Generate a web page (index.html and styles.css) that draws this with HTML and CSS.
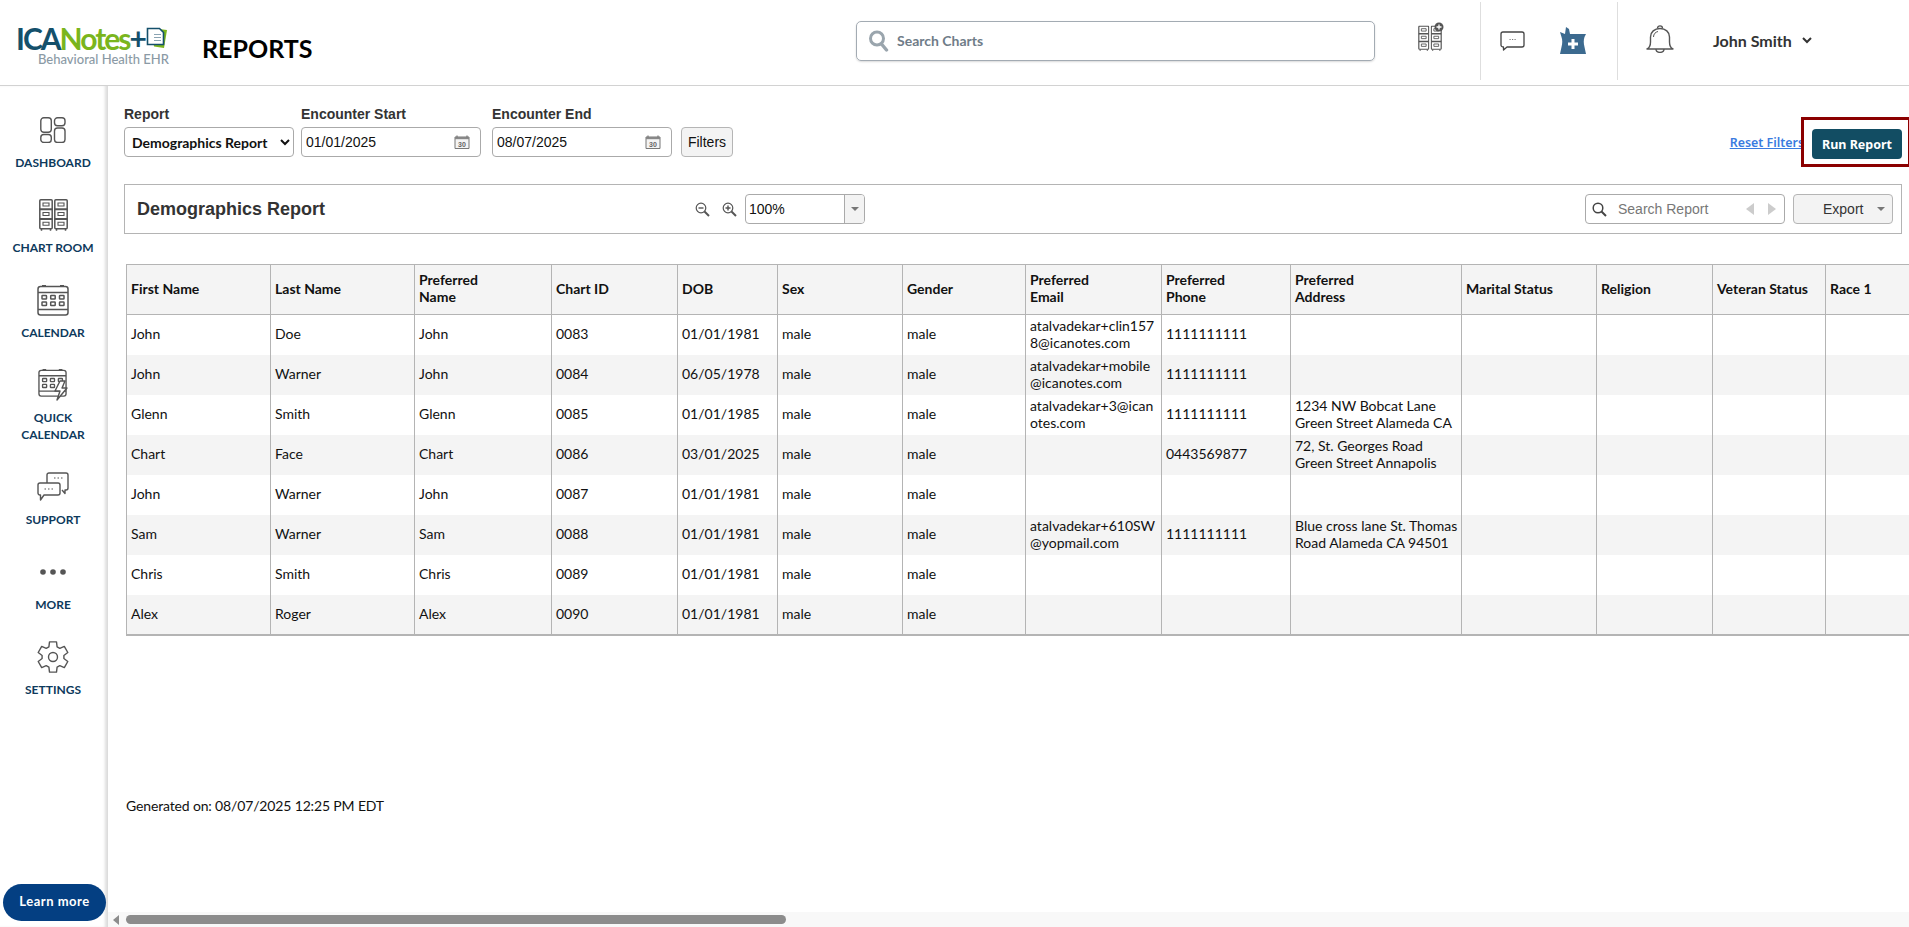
FILE: index.html
```html
<!DOCTYPE html>
<html lang="en">
<head>
<meta charset="utf-8">
<title>Reports</title>
<link rel="stylesheet" href="styles.css">
</head>
<body>
<svg class="defs" width="0" height="0" aria-hidden="true">
  <symbol id="cabinet" viewBox="0 0 14 32">
    <g fill="none" stroke="#555" stroke-width="1.500">
      <rect x=".8" y=".8" width="12.400" height="29" rx="1"/>
      <path d="M.8 10.300h12.400M.8 20h12.400" stroke-width="2"/>
      <path d="M4 4h6v3H4zM4 13.500h6v3H4zM4 23.200h6v3H4z" stroke-width="1.100"/>
      <path d="M2.500 30v1.700M11.500 30v1.700"/>
    </g>
  </symbol>
  <symbol id="calgrid" viewBox="0 0 32 31">
    <g fill="none" stroke="#555" stroke-width="1.500" stroke-linejoin="round">
      <rect x="1" y="1.500" width="30" height="28.500" rx="2.500"/>
      <path d="M1 7.500h30M1 24.500h30"/>
      <path d="M5 .8h4M23 .8h4" stroke-width="1.500"/>
      <rect x="5" y="10.500" width="4.500" height="3.500" rx=".6"/>
      <rect x="13.700" y="10.500" width="4.500" height="3.500" rx=".6"/>
      <rect x="22.500" y="10.500" width="4.500" height="3.500" rx=".6"/>
      <rect x="5" y="17" width="4.500" height="3.500" rx=".6"/>
      <rect x="13.700" y="17" width="4.500" height="3.500" rx=".6"/>
      <rect x="22.500" y="17" width="4.500" height="3.500" rx=".6"/>
    </g>
  </symbol>
</svg>

<header class="topbar">
  <div class="brand">
    <div class="brand-line">
      <span class="brand-ica">ICA</span><span class="brand-notes">Notes</span><span class="brand-ica">+</span>
      <svg class="brand-doc" width="21" height="25" viewBox="0 0 21 25">
        <path d="M5 3l16 2-3 18-10-1.500z" fill="#7ab51d"/>
        <path d="M1.500 3.500h12l4 4v12h-16z" fill="#fff" stroke="#14506b" stroke-width="1.600"/>
        <path d="M8 9.500h7M8 12.500h7M8 15.500h7" stroke="#8aa4b3" stroke-width="1"/>
      </svg>
    </div>
    <div class="brand-sub">Behavioral Health EHR</div>
  </div>
  <h1 class="page-title">REPORTS</h1>
  <label class="chart-search">
    <svg width="20" height="22" viewBox="0 0 20 22"><circle cx="8" cy="8.500" r="6.500" fill="none" stroke="#9aa5ad" stroke-width="3"/><path d="M12.500 14l5 6" stroke="#9aa5ad" stroke-width="3.400" stroke-linecap="round"/></svg>
    <input class="chart-search-input" type="text" placeholder="Search Charts">
  </label>
  <svg class="tool-cabinet" width="26" height="29" viewBox="0 0 26 29">
    <use href="#cabinet" x="0" y="3.500" width="11.500" height="25.500"/>
    <use href="#cabinet" x="12.500" y="3.500" width="11.500" height="25.500"/>
    <circle cx="21" cy="5" r="4.500" fill="#555"/>
    <path d="M18.500 5h5M21 2.500v5" stroke="#fff" stroke-width="1.300"/>
  </svg>
  <div class="tool-sep tool-sep-a"></div>
  <svg class="tool-msg" width="25" height="20" viewBox="0 0 25 20">
    <path d="M3 1h19a2 2 0 0 1 2 2v11a2 2 0 0 1-2 2H7l-3.500 3v-3H3a2 2 0 0 1-2-2V3a2 2 0 0 1 2-2z" fill="none" stroke="#444" stroke-width="1.300" stroke-linejoin="round"/>
    <path d="M9.500 8.500h1.200M12 8.500h1.200M14.500 8.500h1.200" stroke="#777" stroke-width="1"/>
  </svg>
  <svg class="tool-rx" width="26" height="28" viewBox="0 0 26 28">
    <path d="M6 0l3 2 1 5h16l-1.500 3c-1 3-1 6 0 10l1.500 7H0l1.500-7c1-4 1-7 0-10L0 5l5 2z" fill="#3c6a8f"/>
    <path d="M13 12v10M8 17h10" stroke="#fff" stroke-width="3"/>
  </svg>
  <div class="tool-sep tool-sep-b"></div>
  <svg class="tool-bell" width="28" height="28" viewBox="0 0 28 28">
    <g fill="none" stroke="#555" stroke-width="1.400" stroke-linejoin="round">
      <path d="M1 24c2-1 3.500-3 3.500-7v-5c0-5 4-8.500 9.500-8.500s9.500 3.500 9.500 8.500v5c0 4 1.500 6 3.500 7z"/>
      <path d="M11.500 3.500c0-3.500 5-3.500 5 0"/>
      <path d="M10 24c0 4.500 8 4.500 8 0"/>
      <path d="M7.500 12c0-3 2-5 4.500-5.500" stroke-width="1"/>
    </g>
  </svg>
  <div class="user-name">John Smith</div>
  <svg class="user-chevron" width="10" height="7" viewBox="0 0 10 7"><path d="M1 1l4 4 4-4" fill="none" stroke="#333" stroke-width="2"/></svg>
</header>

<div class="body-row">
  <nav class="sidebar">
    <a class="nav-item">
      <span class="nav-icon">
        <svg width="26" height="26" viewBox="0 0 26 26"><g fill="none" stroke="#555" stroke-width="1.400"><rect x=".8" y=".8" width="10.500" height="14.500" rx="3"/><rect x=".8" y="17.500" width="10.500" height="8" rx="3"/><rect x="14.500" y=".8" width="10.500" height="8" rx="3"/><rect x="14.500" y="11" width="10.500" height="14.500" rx="3"/></g></svg>
      </span>
      <span class="nav-label">DASHBOARD</span>
    </a>
    <a class="nav-item">
      <span class="nav-icon">
        <svg width="29" height="32" viewBox="0 0 29 32"><use href="#cabinet" x="0" y="0" width="14" height="32"/><use href="#cabinet" x="15" y="0" width="14" height="32"/></svg>
      </span>
      <span class="nav-label">CHART ROOM</span>
    </a>
    <a class="nav-item">
      <span class="nav-icon">
        <svg width="32" height="31" viewBox="0 0 32 31"><use href="#calgrid"/></svg>
      </span>
      <span class="nav-label">CALENDAR</span>
    </a>
    <a class="nav-item">
      <span class="nav-icon">
        <svg width="31" height="32" viewBox="0 0 31 32">
          <use href="#calgrid" width="29" height="28"/>
          <path d="M22 12l-5 10h5l-3 9 10-12h-5l3-7z" fill="#fff" stroke="#555" stroke-width="1.400" stroke-linejoin="round"/>
        </svg>
      </span>
      <span class="nav-label">QUICK<br>CALENDAR</span>
    </a>
    <a class="nav-item">
      <span class="nav-icon">
        <svg width="32" height="30" viewBox="0 0 32 30">
          <g fill="none" stroke="#555" stroke-width="1.400" stroke-linejoin="round">
            <path d="M10 11V3a2 2 0 0 1 2-2h17a2 2 0 0 1 2 2v13a2 2 0 0 1-2 2h-1v3.500l-3-3.500"/>
            <path d="M3 11h18a2 2 0 0 1 2 2v8a2 2 0 0 1-2 2H7l-3.500 5v-5H3a2 2 0 0 1-2-2v-8a2 2 0 0 1 2-2z"/>
            <path d="M7.500 17h1.500M11 17h1.500M14.500 17h1.500M17 6h1.500M20.500 6h1.500M24 6h1.500" stroke-width="1.100"/>
          </g>
        </svg>
      </span>
      <span class="nav-label">SUPPORT</span>
    </a>
    <a class="nav-item">
      <span class="nav-icon">
        <svg width="26" height="6" viewBox="0 0 26 6"><g fill="#555"><circle cx="3" cy="3" r="2.800"/><circle cx="13" cy="3" r="2.800"/><circle cx="23" cy="3" r="2.800"/></g></svg>
      </span>
      <span class="nav-label">MORE</span>
    </a>
    <a class="nav-item">
      <span class="nav-icon">
        <svg width="32" height="32" viewBox="0 0 32 32"><g fill="none" stroke="#555" stroke-width="1.400" stroke-linejoin="round"><path d="M12.500 .9L19.500 .9L20.100 5.800L22.800 7.300L27.300 5.400L30.800 11.500L26.900 14.500L26.900 17.500L30.800 20.500L27.300 26.600L22.800 24.700L20.100 26.200L19.500 31.100L12.500 31.100L11.900 26.200L9.200 24.700L4.700 26.600L1.200 20.500L5.100 17.500L5.100 14.500L1.200 11.500L4.700 5.400L9.200 7.300L11.900 5.800Z"/><circle cx="16" cy="16" r="4.500"/></g></svg>
      </span>
      <span class="nav-label">SETTINGS</span>
    </a>
    <button class="learn-more" type="button">Learn more</button>
  </nav>

  <main class="content">
    <section class="filters">
      <div class="field">
        <label class="field-label">Report</label>
        <select class="report-select"><option>Demographics Report</option></select>
      </div>
      <div class="field">
        <label class="field-label">Encounter Start</label>
        <div class="date-box">
          <input class="date-input" type="text" value="01/01/2025">
          <svg class="date-icon" width="16" height="14" viewBox="0 0 16 14">
            <path d="M1 2h14v11.500H1z" fill="#f4f4f4" stroke="#777"/>
            <path d="M1 2h14v2.200H1z" fill="#888"/>
            <path d="M3 .5v2M13 .5v2" stroke="#777" stroke-width="1.200"/>
            <text x="8" y="11.600" class="cal-num">30</text>
          </svg>
        </div>
      </div>
      <div class="field field-end">
        <label class="field-label">Encounter End</label>
        <div class="date-box">
          <input class="date-input" type="text" value="08/07/2025">
          <svg class="date-icon" width="16" height="14" viewBox="0 0 16 14">
            <path d="M1 2h14v11.500H1z" fill="#f4f4f4" stroke="#777"/>
            <path d="M1 2h14v2.200H1z" fill="#888"/>
            <path d="M3 .5v2M13 .5v2" stroke="#777" stroke-width="1.200"/>
            <text x="8" y="11.600" class="cal-num">30</text>
          </svg>
        </div>
      </div>
      <button class="filters-btn" type="button">Filters</button>
      <a class="reset-link">Reset Filters</a>
      <button class="run-btn" type="button">Run Report</button>
    </section>

    <section class="viewer-bar">
      <h2 class="viewer-title">Demographics Report</h2>
      <svg class="zoom-icon" width="15" height="15" viewBox="0 0 15 15"><g fill="none" stroke="#555"><circle cx="6" cy="6" r="4.800" stroke-width="1.200"/><path d="M3.500 6h5" stroke-width="1.400"/><path d="M9.500 9.500l4.500 4.500" stroke-width="2"/></g></svg>
      <svg class="zoom-icon" width="15" height="15" viewBox="0 0 15 15"><g fill="none" stroke="#555"><circle cx="6" cy="6" r="4.800" stroke-width="1.200"/><path d="M3.500 6h5M6 3.500v5" stroke-width="1.400"/><path d="M9.500 9.500l4.500 4.500" stroke-width="2"/></g></svg>
      <div class="zoom-combo">
        <span class="zoom-value">100%</span>
        <span class="zoom-arrow"><i class="caret"></i></span>
      </div>
      <div class="report-search">
        <svg width="15" height="15" viewBox="0 0 15 15"><g fill="none" stroke="#444"><circle cx="6" cy="6" r="4.800" stroke-width="1.500"/><path d="M9.500 9.500l4.500 4.500" stroke-width="2"/></g></svg>
        <input class="report-search-input" type="text" placeholder="Search Report">
        <i class="tri tri-left"></i>
        <i class="tri tri-right"></i>
      </div>
      <button class="export-btn" type="button"><span>Export</span><i class="caret"></i></button>
    </section>

    <div class="table-wrap">
      <table class="report-table">
        <thead>
          <tr>
            <th>First Name</th><th>Last Name</th><th>Preferred<br>Name</th><th>Chart ID</th><th>DOB</th><th>Sex</th><th>Gender</th><th>Preferred<br>Email</th><th>Preferred<br>Phone</th><th>Preferred<br>Address</th><th>Marital Status</th><th>Religion</th><th>Veteran Status</th><th>Race 1</th>
          </tr>
        </thead>
        <tbody>
          <tr><td>John</td><td>Doe</td><td>John</td><td>0083</td><td>01/01/1981</td><td>male</td><td>male</td><td>atalvadekar+clin157<br>8@icanotes.com</td><td>1111111111</td><td></td><td></td><td></td><td></td><td></td></tr>
          <tr><td>John</td><td>Warner</td><td>John</td><td>0084</td><td>06/05/1978</td><td>male</td><td>male</td><td>atalvadekar+mobile<br>@icanotes.com</td><td>1111111111</td><td></td><td></td><td></td><td></td><td></td></tr>
          <tr><td>Glenn</td><td>Smith</td><td>Glenn</td><td>0085</td><td>01/01/1985</td><td>male</td><td>male</td><td>atalvadekar+3@ican<br>otes.com</td><td>1111111111</td><td>1234 NW Bobcat Lane<br>Green Street Alameda CA</td><td></td><td></td><td></td><td></td></tr>
          <tr><td>Chart</td><td>Face</td><td>Chart</td><td>0086</td><td>03/01/2025</td><td>male</td><td>male</td><td></td><td>0443569877</td><td>72, St. Georges Road<br>Green Street Annapolis</td><td></td><td></td><td></td><td></td></tr>
          <tr><td>John</td><td>Warner</td><td>John</td><td>0087</td><td>01/01/1981</td><td>male</td><td>male</td><td></td><td></td><td></td><td></td><td></td><td></td><td></td></tr>
          <tr><td>Sam</td><td>Warner</td><td>Sam</td><td>0088</td><td>01/01/1981</td><td>male</td><td>male</td><td>atalvadekar+610SW<br>@yopmail.com</td><td>1111111111</td><td>Blue cross lane St. Thomas<br>Road Alameda CA 94501</td><td></td><td></td><td></td><td></td></tr>
          <tr><td>Chris</td><td>Smith</td><td>Chris</td><td>0089</td><td>01/01/1981</td><td>male</td><td>male</td><td></td><td></td><td></td><td></td><td></td><td></td><td></td></tr>
          <tr><td>Alex</td><td>Roger</td><td>Alex</td><td>0090</td><td>01/01/1981</td><td>male</td><td>male</td><td></td><td></td><td></td><td></td><td></td><td></td><td></td></tr>
        </tbody>
      </table>
    </div>

    <p class="generated">Generated on: 08/07/2025 12:25 PM EDT</p>

    <div class="hscroll">
      <i class="hscroll-arrow"></i>
      <div class="hscroll-thumb"></div>
    </div>
  </main>
</div>
<div class="highlight-box" aria-hidden="true"></div>
</body>
</html>
```

FILE: styles.css
```css
* { box-sizing: border-box; }
html, body { margin: 0; height: 100%; }
body {
  width: 1909px;
  height: 927px;
  overflow: hidden;
  position: relative;
  display: flex;
  flex-direction: column;
  background: #fff;
  font-family: "Lato", sans-serif;
  color: #111;
}
.defs { position: absolute; }
.cal-num { font: 700 7px "Liberation Sans", sans-serif; fill: #666; text-anchor: middle; }

/* Top bar */
.topbar {
  flex: none;
  height: 86px;
  display: flex;
  align-items: center;
  padding-bottom: 4px;
  border-bottom: 1px solid #d2d2d2;
}
.brand { width: 186px; margin-left: 16px; padding-top: 9px; }
.brand-line {
  display: flex;
  align-items: center;
  height: 28px;
  font-size: 30px;
  font-weight: 700;
  letter-spacing: -2px;
  line-height: 28px;
}
.brand-ica { color: #14506b; }
.brand-notes { color: #7ab51d; }
.brand-doc { margin-left: 1px; }
.brand-sub { margin: 0 0 0 22px; font-size: 13px; line-height: 15px; color: #8b9aa5; font-weight: 500; white-space: nowrap; }
.page-title { width: 654px; margin: 14px 0 0; font-size: 25px; font-weight: 700; color: #000; line-height: 30px; }

.chart-search {
  width: 519px;
  height: 40px;
  display: flex;
  align-items: center;
  gap: 6px;
  padding-left: 12px;
  border: 1px solid #a3abb3;
  border-radius: 5px;
  box-shadow: 0 1px 2px rgba(0,0,0,.15);
}
.chart-search-input {
  flex: 1;
  border: 0;
  outline: 0;
  font: 700 14px "Lato", sans-serif;
}
.chart-search-input::placeholder { color: #6f7c88; opacity: 1; }
.tool-cabinet { margin-left: 43px; margin-bottom: 8px; }
.tool-sep { align-self: flex-start; width: 1px; height: 78px; margin-top: 2px; background: #dedede; }
.tool-sep-a { margin-left: 36px; }
.tool-msg { margin-left: 19px; }
.tool-rx { margin-left: 35px; }
.tool-sep-b { margin-left: 31px; }
.tool-bell { margin-left: 28px; margin-bottom: 4px; }
.user-name { margin-left: 39px; font-size: 16px; font-weight: 700; color: #333; }
.user-chevron { margin-left: 10px; }

/* Body */
.body-row { flex: 1; min-height: 0; display: flex; }

/* Sidebar */
.sidebar {
  flex: none;
  width: 108px;
  display: flex;
  flex-direction: column;
  gap: 26px;
  padding: 26px 1px 0 0;
  border-right: 1px solid #dcdcdc;
  box-shadow: inset -3px 0 3px -1px #dedede;
}
.nav-item { display: flex; flex-direction: column; align-items: center; gap: 6px; }
.nav-icon { height: 36px; display: flex; align-items: center; justify-content: center; }
.nav-label {
  font-size: 12px;
  font-weight: 700;
  line-height: 17px;
  color: #0e3a5c;
  text-align: center;
  white-space: nowrap;
}
.learn-more {
  width: 103px;
  height: 37px;
  margin: auto 0 6px 3px;
  padding: 0 0 3px;
  border: 0;
  border-radius: 19px;
  background: #043f82;
  color: #fff;
  font: 700 13px "Lato", sans-serif;
  letter-spacing: .5px;
}

/* Content */
.content {
  flex: 1;
  min-width: 0;
  display: flex;
  flex-direction: column;
  overflow: hidden;
}
.filters {
  flex: none;
  display: flex;
  align-items: flex-end;
  height: 71px;
  margin-left: 16px;
  margin-right: 7px;
}
.field { display: flex; flex-direction: column; gap: 5px; margin-right: 7px; }
.field-end { margin-left: 4px; margin-right: 9px; }
.field-label {
  font: 700 14px/16px "Liberation Sans", sans-serif;
  color: #333;
}
.report-select {
  width: 170px;
  height: 30px;
  padding-left: 3px;
  border: 1px solid #aaa;
  border-radius: 4px;
  background-color: #fff;
  font: 700 14px "Lato", sans-serif;
  color: #111;
}
.date-box {
  width: 180px;
  height: 30px;
  display: flex;
  align-items: center;
  padding: 0 10px 0 4px;
  border: 1px solid #aaa;
  border-radius: 4px;
}
.date-input {
  flex: 1;
  min-width: 0;
  padding: 0;
  border: 0;
  outline: 0;
  font: 14px "Liberation Sans", sans-serif;
  color: #111;
}
.date-icon { flex: none; }
.filters-btn {
  width: 52px;
  height: 30px;
  padding: 0;
  border: 1px solid #b5b5b5;
  border-radius: 4px;
  background: #f3f3f3;
  font: 14px "Liberation Sans", sans-serif;
  color: #111;
}
.reset-link {
  margin-left: auto;
  align-self: flex-end;
  margin-bottom: 5px;
  font: 600 12.4px/18px "Noto Sans", sans-serif;
  color: #3a7be0;
  text-decoration: underline;
  white-space: nowrap;
}
.run-btn {
  flex: none;
  width: 90px;
  height: 30px;
  margin-left: 8px;
  margin-bottom: -2px;
  border: 0;
  border-radius: 4px;
  background: #124d63;
  color: #fff;
  font: 700 12.5px "Noto Sans", sans-serif;
}

.viewer-bar {
  flex: none;
  display: flex;
  align-items: center;
  height: 50px;
  margin: 27px 7px 0 16px;
  padding-right: 8px;
  border: 1px solid #b4b4b4;
}
.viewer-title {
  width: 570px;
  margin: 0;
  padding: 1px 0 0 12px;
  font: 700 18px "Liberation Sans", sans-serif;
  color: #333;
}
.zoom-icon { flex: none; margin-right: 12px; }
.zoom-icon + .zoom-icon { margin-right: 8px; margin-left: 0; }
.zoom-combo {
  width: 120px;
  height: 30px;
  display: flex;
  border: 1px solid #aaa;
  border-radius: 4px;
  font: 14px "Liberation Sans", sans-serif;
}
.zoom-value { flex: 1; padding-left: 3px; line-height: 28px; color: #111; }
.zoom-arrow {
  width: 20px;
  display: flex;
  align-items: center;
  justify-content: center;
  border-left: 1px solid #aaa;
  background: #f3f3f3;
  border-radius: 0 3px 3px 0;
}
.caret {
  display: block;
  width: 0;
  height: 0;
  border: 4px solid transparent;
  border-top: 4px solid #777;
  border-bottom: 0;
}
.report-search {
  width: 200px;
  height: 30px;
  margin-left: auto;
  display: flex;
  align-items: center;
  padding: 0 8px 0 6px;
  border: 1px solid #aaa;
  border-radius: 4px;
}
.report-search-input {
  flex: 1;
  min-width: 0;
  padding: 0 0 0 11px;
  border: 0;
  outline: 0;
  font: 14px "Liberation Sans", sans-serif;
}
.report-search-input::placeholder { color: #777; opacity: 1; }
.tri { display: block; width: 0; height: 0; border: 6px solid transparent; }
.tri-left { border-left: 0; border-right: 8px solid #ccc; margin-right: 14px; }
.tri-right { border-right: 0; border-left: 8px solid #ccc; }
.export-btn {
  width: 100px;
  height: 30px;
  margin-left: 8px;
  display: flex;
  align-items: center;
  padding: 0 7px 0 29px;
  border: 1px solid #b5b5b5;
  border-radius: 4px;
  background: #f3f3f3;
  font: 14px "Liberation Sans", sans-serif;
  color: #333;
}
.export-btn .caret { margin-left: auto; }

.table-wrap { flex: none; margin: 30px 0 0 18px; }
.report-table {
  width: 1819px;
  table-layout: fixed;
  border-collapse: collapse;
  font-size: 14px;
  line-height: 17px;
  color: #111;
}
.report-table th, .report-table td {
  padding: 0 4px 2px 4px;
  border-left: 1px solid #b4b4b4;
  text-align: left;
  vertical-align: middle;
  white-space: nowrap;
  overflow: hidden;
}
.report-table th {
  height: 50px;
  padding-bottom: 3px;
  font-weight: 700;
  background: #f4f4f4;
  border-top: 1px solid #b4b4b4;
  border-bottom: 1px solid #b4b4b4;
}
.report-table td { height: 40px; }
.report-table tbody tr:nth-child(even) { background: #f4f4f4; }
.report-table tbody tr:last-child td { border-bottom: 2px solid #b4b4b4; }
.report-table th:nth-child(1) { width: 144px; }
.report-table th:nth-child(2) { width: 144px; }
.report-table th:nth-child(3) { width: 137px; }
.report-table th:nth-child(4) { width: 126px; }
.report-table th:nth-child(5) { width: 100px; }
.report-table th:nth-child(6) { width: 125px; }
.report-table th:nth-child(7) { width: 123px; }
.report-table th:nth-child(8) { width: 136px; }
.report-table th:nth-child(9) { width: 129px; }
.report-table th:nth-child(10) { width: 171px; }
.report-table th:nth-child(11) { width: 135px; }
.report-table th:nth-child(12) { width: 116px; }
.report-table th:nth-child(13) { width: 113px; }
.report-table th:nth-child(14) { width: 120px; }

.generated {
  flex: none;
  margin: 161px 0 0 18px;
  font-size: 14px;
  line-height: 17px;
  letter-spacing: -.15px;
  color: #111;
}
.hscroll {
  flex: none;
  height: 15px;
  margin-top: auto;
  display: flex;
  align-items: center;
  padding-left: 5px;
  background: #f8f8f8;
}
.hscroll-arrow {
  display: block;
  width: 0;
  height: 0;
  border: 5px solid transparent;
  border-left: 0;
  border-right: 6px solid #8c8c8c;
}
.hscroll-thumb {
  width: 660px;
  height: 9px;
  margin-left: 7px;
  border-radius: 5px;
  background: #8c8c8c;
}

/* Red annotation around Run Report */
.highlight-box {
  position: absolute;
  left: 1801px;
  top: 117px;
  width: 108px;
  height: 50px;
  border: 3px solid #8b0000;
  border-right-width: 1px;
  pointer-events: none;
}
```
